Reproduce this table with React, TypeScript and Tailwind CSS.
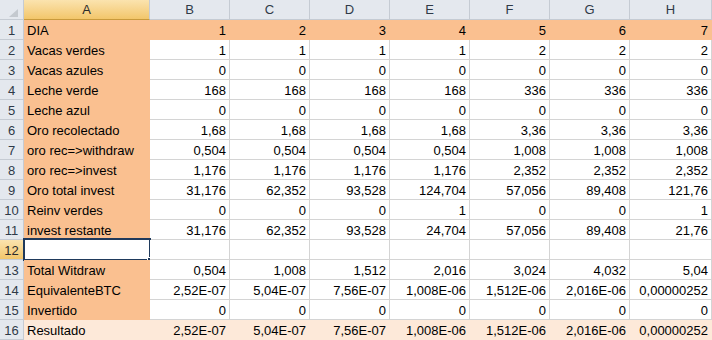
import React from "react";

const cols = ["A", "B", "C", "D", "E", "F", "G", "H"];

type Row = { label: string; vals: string[] };

const rows: Row[] = [
  { label: "DIA", vals: ["1", "2", "3", "4", "5", "6", "7"] },
  { label: "Vacas verdes", vals: ["1", "1", "1", "1", "2", "2", "2"] },
  { label: "Vacas azules", vals: ["0", "0", "0", "0", "0", "0", "0"] },
  { label: "Leche verde", vals: ["168", "168", "168", "168", "336", "336", "336"] },
  { label: "Leche azul", vals: ["0", "0", "0", "0", "0", "0", "0"] },
  { label: "Oro recolectado", vals: ["1,68", "1,68", "1,68", "1,68", "3,36", "3,36", "3,36"] },
  { label: "oro rec=>withdraw", vals: ["0,504", "0,504", "0,504", "0,504", "1,008", "1,008", "1,008"] },
  { label: "oro rec=>invest", vals: ["1,176", "1,176", "1,176", "1,176", "2,352", "2,352", "2,352"] },
  { label: "Oro total invest", vals: ["31,176", "62,352", "93,528", "124,704", "57,056", "89,408", "121,76"] },
  { label: "Reinv verdes", vals: ["0", "0", "0", "1", "0", "0", "1"] },
  { label: "invest restante", vals: ["31,176", "62,352", "93,528", "24,704", "57,056", "89,408", "21,76"] },
  { label: "", vals: ["", "", "", "", "", "", ""] },
  { label: "Total Witdraw", vals: ["0,504", "1,008", "1,512", "2,016", "3,024", "4,032", "5,04"] },
  { label: "EquivalenteBTC", vals: ["2,52E-07", "5,04E-07", "7,56E-07", "1,008E-06", "1,512E-06", "2,016E-06", "0,00000252"] },
  { label: "Invertido", vals: ["0", "0", "0", "0", "0", "0", "0"] },
  { label: "Resultado", vals: ["2,52E-07", "5,04E-07", "7,56E-07", "1,008E-06", "1,512E-06", "2,016E-06", "0,00000252"] },
];

function fillFor(r: number, c: number): "orange" | "light" | "white" {
  if (r === 16) return "light";
  if (r === 1) return "orange";
  if (c === 0 && r !== 12) return "orange";
  return "white";
}

export default function App() {
  return (
    <div
      className="w-[712px] h-[340px] overflow-hidden bg-white text-[13px] text-black"
      style={{ fontFamily: '"Liberation Sans", Arial, sans-serif' }}
    >
      <div className="grid grid-cols-[24px_126px_80px_80px_80px_80px_80px_80px_82px] grid-rows-[repeat(17,20px)]">
        <div className="relative border-r border-b border-[#c5cbd3] bg-[#e4e8ee]">
          <svg className="absolute left-[9px] top-[9px]" width="9" height="8" viewBox="0 0 9 8">
            <polygon points="9,0 9,8 0,8" fill="#c4c9cf" />
          </svg>
        </div>
        {cols.map((c) =>
          c === "A" ? (
            <div
              key={c}
              className="flex items-center justify-center border-r border-b border-r-[#c5cbd3] border-b-[#c99a3c] bg-gradient-to-b from-[#fbe3ae] to-[#f2c66a] text-[#2b2b2b] pt-[1px]"
            >
              {c}
            </div>
          ) : (
            <div
              key={c}
              className="flex items-center justify-center border-r border-b border-[#c5cbd3] bg-[#e4e8ee] text-[#2f3a48] pt-[1px]"
            >
              {c}
            </div>
          )
        )}
        {rows.map((row, ri) => {
          const r = ri + 1;
          const cells = [row.label, ...row.vals];
          return (
            <React.Fragment key={r}>
              {r === 12 ? (
                <div className="flex items-center justify-center border-r border-b border-r-[#c99a3c] border-b-[#c5cbd3] bg-gradient-to-b from-[#fbe3ae] to-[#f2c66a] text-[#2b2b2b] pt-[3px]">
                  {r}
                </div>
              ) : (
                <div className="flex items-center justify-center border-r border-b border-[#c5cbd3] bg-[#e4e8ee] text-[#2f3a48] pt-[3px]">
                  {r}
                </div>
              )}
              {cells.map((v, ci) => {
                const f = fillFor(r, ci);
                const cls =
                  f === "orange"
                    ? "bg-[#fac090] border-[#fac090]"
                    : f === "light"
                    ? "bg-[#fde9d9] border-[#fde9d9]"
                    : "bg-white border-[#d4d4d4]";
                const align = ci === 0 ? "justify-start pl-[3px]" : "justify-end pr-[3px]";
                return (
                  <div
                    key={ci}
                    className={`relative flex items-center whitespace-nowrap border-r border-b pt-[3px] ${cls} ${align}`}
                  >
                    {v}
                    {r === 12 && ci === 0 && (
                      <div className="absolute -left-[1px] -top-[2px] w-[128px] h-[23px] border-[2px] border-[#1f3a5c]">
                        <div className="absolute -right-[4px] -bottom-[4px] w-[6px] h-[6px] bg-[#1f3a5c] border border-white" />
                      </div>
                    )}
                  </div>
                );
              })}
            </React.Fragment>
          );
        })}
      </div>
    </div>
  );
}
